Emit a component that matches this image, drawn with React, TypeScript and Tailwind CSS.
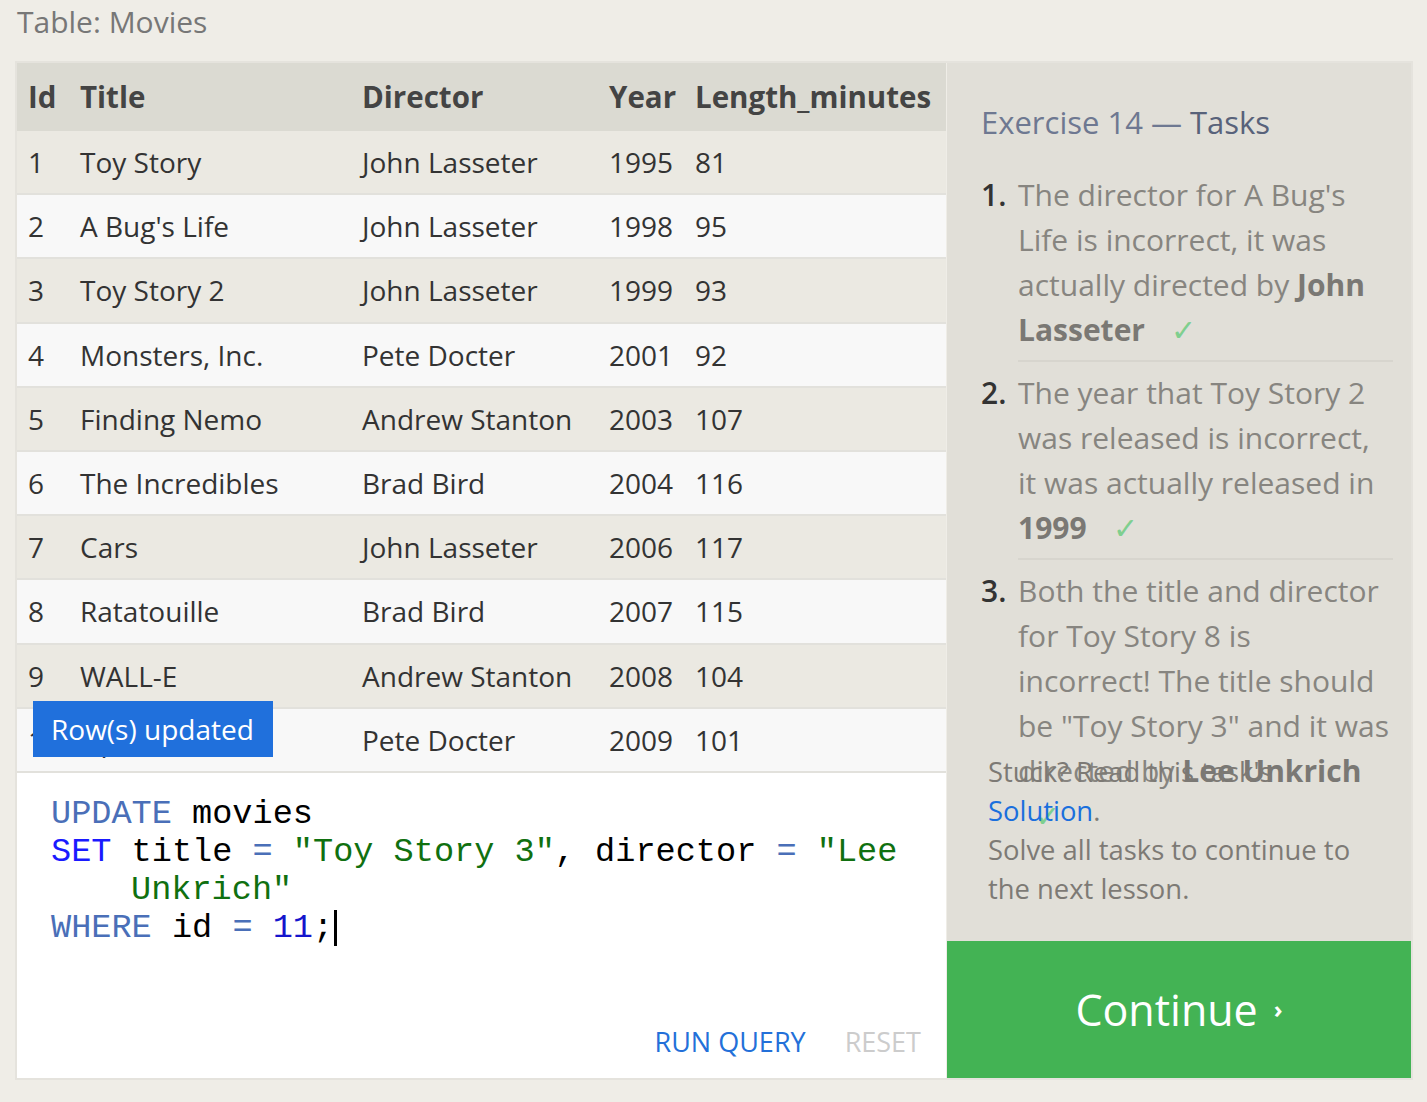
import { ReactNode } from 'react';

type Movie = { id: number; title: string; director: string; year: number; length: number };

const MOVIES: Movie[] = [
  { id: 1, title: 'Toy Story', director: 'John Lasseter', year: 1995, length: 81 },
  { id: 2, title: "A Bug's Life", director: 'John Lasseter', year: 1998, length: 95 },
  { id: 3, title: 'Toy Story 2', director: 'John Lasseter', year: 1999, length: 93 },
  { id: 4, title: 'Monsters, Inc.', director: 'Pete Docter', year: 2001, length: 92 },
  { id: 5, title: 'Finding Nemo', director: 'Andrew Stanton', year: 2003, length: 107 },
  { id: 6, title: 'The Incredibles', director: 'Brad Bird', year: 2004, length: 116 },
  { id: 7, title: 'Cars', director: 'John Lasseter', year: 2006, length: 117 },
  { id: 8, title: 'Ratatouille', director: 'Brad Bird', year: 2007, length: 115 },
  { id: 9, title: 'WALL-E', director: 'Andrew Stanton', year: 2008, length: 104 },
  { id: 10, title: 'Up', director: 'Pete Docter', year: 2009, length: 101 }
];

const COLS = 'grid grid-cols-[52px_282px_247px_86px_1fr]';

function Check({ wrap }: { wrap?: boolean }) {
  return (
    <span className={wrap ? 'ml-[17px] text-[#7fcf8f] font-normal' : 'ml-[26px] text-[#7fcf8f] font-normal'}>✓</span>
  );
}

function Task({ n, children, last }: { n: number; children: ReactNode; last?: boolean }) {
  return (
    <li className="flex">
      <span className="w-[37px] shrink-0 text-[#333] font-semibold">{n}.</span>
      <div
        className={
          last
            ? 'w-[375px]'
            : 'w-[375px] pb-[8px] mb-[8px] border-b-2 border-[#d7d5ce]'
        }
      >
        {children}
      </div>
    </li>
  );
}

function Code() {
  const kw = 'text-[#4a6fb8]';
  const kw2 = 'text-[#1a1aff]';
  const str = 'text-[#107010]';
  return (
    <div className="font-['Liberation_Mono',monospace] text-[33.6px] leading-[38px] text-black whitespace-pre">
      <div>
        <span className={kw}>UPDATE</span> movies
      </div>
      <div>
        <span className={kw2}>SET</span> title <span className={kw}>=</span>{' '}
        <span className={str}>"Toy Story 3"</span>, director <span className={kw}>=</span>{' '}
        <span className={str}>"Lee</span>
      </div>
      <div className="pl-[80px]">
        <span className={str}>Unkrich"</span>
      </div>
      <div className="flex items-center">
        <span className={kw}>WHERE</span>&nbsp;id&nbsp;<span className={kw}>=</span>&nbsp;
        <span className="text-[#1515cc]">11</span>;<span className="inline-block w-[3px] h-[36px] bg-black ml-[1px]" />
      </div>
    </div>
  );
}

export default function App() {
  return (
    <div className="min-h-[1102px] bg-[#efede7] font-['Open_Sans','Noto_Sans',sans-serif] pt-[2px]">
      <div className="pl-[17px] text-[30px] leading-[40px] text-[#777]">Table: Movies</div>

      <div className="ml-[15px] mt-[19px] w-[1398px] border-2 border-[#e5e3dd] flex">
        {/* left: table + editor */}
        <div className="w-[929px] relative">
          <div className={`${COLS} h-[68px] items-center bg-[#dbdad2] text-[29.5px] font-bold text-[#444]`}>
            <div className="pl-[11px]">Id</div>
            <div className="pl-[11px]">Title</div>
            <div className="pl-[11px]">Director</div>
            <div className="pl-[11px]">Year</div>
            <div className="pl-[11px]">Length_minutes</div>
          </div>
          {MOVIES.map((m, i) => (
            <div
              key={m.id}
              className={`${COLS} h-[64.2px] items-center border-b-2 border-[#e2e1dc] text-[28px] text-[#333] ${
                i % 2 === 0 ? 'bg-[#ebe9e2]' : 'bg-[#f8f8f8]'
              }`}
            >
              <div className="pl-[11px]">{m.id}</div>
              <div className="pl-[11px]">{m.title}</div>
              <div className="pl-[11px]">{m.director}</div>
              <div className="pl-[11px]">{m.year}</div>
              <div className="pl-[11px]">{m.length}</div>
            </div>
          ))}

          <div className="absolute left-[16px] top-[638px] w-[240px] h-[56px] bg-[#2070dc] text-white text-[28px] flex items-center pl-[18px]">
            Row(s) updated
          </div>

          <div className="bg-white h-[305px] flex flex-col pl-[34px] pt-[22px] pr-[25px] pb-[18px]">
            <Code />
            <div className="mt-auto flex justify-end gap-[39px] text-[27px] leading-[36px]">
              <span className="text-[#2370d9]">RUN QUERY</span>
              <span className="text-[#cccccc]">RESET</span>
            </div>
          </div>
        </div>

        {/* right: tasks */}
        <div className="flex-1 ml-px bg-[#e1dfd8] flex flex-col">
          <div className="flex-1 pl-[34px] pt-[37px]">
            <h2 className="text-[31px] leading-[45px] text-[#6e7891]">
              Exercise 14 — <span className="text-[#58627a] font-medium">Tasks</span>
            </h2>
            <ol className="mt-[27px] h-[580px] text-[30px] leading-[45px] text-[#878580] whitespace-nowrap">
              <Task n={1}>
                The director for A Bug's
                <br />
                Life is incorrect, it was
                <br />
                actually directed by <b className="text-[#7a7874]">John</b>
                <br />
                <b className="text-[#7a7874]">Lasseter</b>
                <Check />
              </Task>
              <Task n={2}>
                The year that Toy Story 2
                <br />
                was released is incorrect,
                <br />
                it was actually released in
                <br />
                <b className="text-[#7a7874]">1999</b>
                <Check />
              </Task>
              <Task n={3} last>
                Both the title and director
                <br />
                for Toy Story 8 is
                <br />
                incorrect! The title should
                <br />
                be "Toy Story 3" and it was
                <br />
                directed by <b className="text-[#7a7874]">Lee Unkrich</b>
                <br />
                <Check wrap />
              </Task>
            </ol>
            <p className="pl-[7px] text-[27.4px] leading-[39px] text-[#7d7a75] whitespace-nowrap">
              Stuck? Read this task's
              <br />
              <span className="text-[#1a6fdd]">Solution</span>.
              <br />
              Solve all tasks to continue to
              <br />
              the next lesson.
            </p>
          </div>
          <div className="h-[137px] bg-[#43b354] flex items-center justify-center text-white">
            <span className="text-[43px] leading-none">Continue</span>
            <span className="ml-[16px] text-[24px] leading-none font-bold">›</span>
          </div>
        </div>
      </div>
    </div>
  );
}
